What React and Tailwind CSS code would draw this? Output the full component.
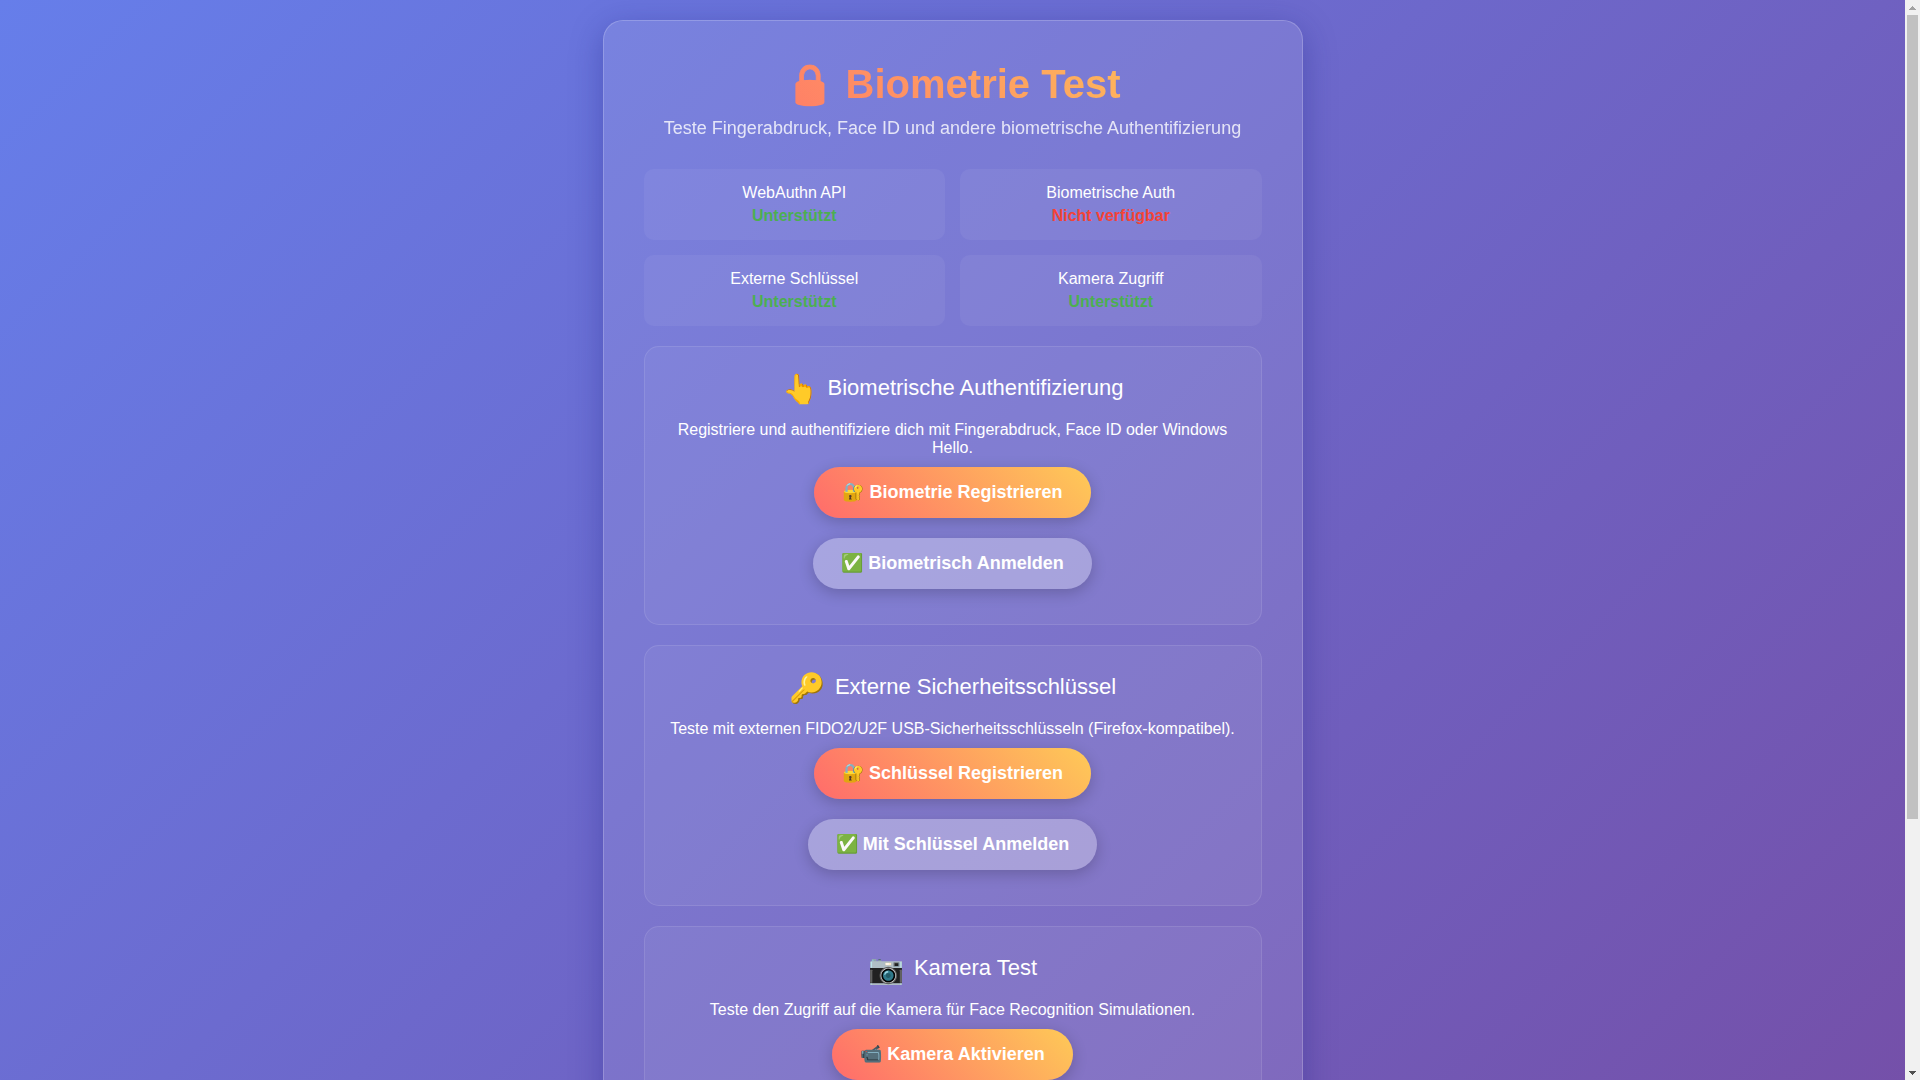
import React from 'react';

const checks = [
  { label: 'WebAuthn API', ok: true, status: 'Unterstützt' },
  { label: 'Biometrische Auth', ok: false, status: 'Nicht verfügbar' },
  { label: 'Externe Schlüssel', ok: true, status: 'Unterstützt' },
  { label: 'Kamera Zugriff', ok: true, status: 'Unterstützt' },
];

const sections = [
  {
    icon: '👆',
    title: 'Biometrische Authentifizierung',
    text: 'Registriere und authentifiziere dich mit Fingerabdruck, Face ID oder Windows Hello.',
    actions: [
      { label: '🔐 Biometrie Registrieren', primary: true },
      { label: '✅ Biometrisch Anmelden' },
    ],
  },
  {
    icon: '🔑',
    title: 'Externe Sicherheitsschlüssel',
    text: 'Teste mit externen FIDO2/U2F USB-Sicherheitsschlüsseln (Firefox-kompatibel).',
    actions: [
      { label: '🔐 Schlüssel Registrieren', primary: true },
      { label: '✅ Mit Schlüssel Anmelden' },
    ],
  },
  {
    icon: '📷',
    title: 'Kamera Test',
    text: 'Teste den Zugriff auf die Kamera für Face Recognition Simulationen.',
    actions: [{ label: '📹 Kamera Aktivieren', primary: true }],
  },
];

const StatusItem = ({ item }) => (
  <div className="rounded-[10px] bg-white/5 p-[15px] text-center leading-[18px]">
    <div className="mb-[5px]">{item.label}</div>
    <div className={`font-bold ${item.ok ? 'text-[#4caf50]' : 'text-[#f44336]'}`}>
      {item.status}
    </div>
  </div>
);

const TestSection = ({ section }) => (
  <section className="mb-5 rounded-[15px] border border-white/10 bg-white/5 p-[25px] text-center">
    <h2 className="mb-[17px] h-8 text-[22px] leading-8">
      <span className="mr-[10px] align-middle text-[29px]">{section.icon}</span>
      {section.title}
    </h2>
    <p className="leading-[18px]">{section.text}</p>
    <div className="flex flex-col items-center">
      {section.actions.map((action) => (
        <button
          key={action.label}
          type="button"
          className={`my-[10px] rounded-full px-7 py-[15px] text-[18px] leading-[21px] font-bold shadow-[0_4px_15px_rgba(0,0,0,0.2)] ${
            action.primary
              ? 'bg-[linear-gradient(45deg,#ff6b6b,#feca57)]'
              : 'bg-white/30'
          }`}
        >
          {action.label}
        </button>
      ))}
    </div>
  </section>
);

const Scrollbar = () => (
  <div className="flex w-[15px] shrink-0 flex-col bg-[#f1f1f1]" aria-hidden="true">
    <div className="flex h-[15px] items-center justify-center">
      <svg width="7" height="4" viewBox="0 0 7 4" fill="#a3a3a3" shapeRendering="crispEdges">
        <path d="M3 0h1v1h1v1h1v1h1v1H0V3h1V2h1V1h1z" />
      </svg>
    </div>
    <div className="flex-1 px-[2px]">
      <div className="h-[76.6%] bg-[#c1c1c1]" />
    </div>
    <div className="flex h-[15px] items-center justify-center">
      <svg width="7" height="4" viewBox="0 0 7 4" fill="#505050" shapeRendering="crispEdges">
        <path d="M0 0h7v1H6v1H5v1H4v1H3V3H2V2H1V1H0z" />
      </svg>
    </div>
  </div>
);

const App = () => {
  return (
    <div className="flex h-screen font-['Liberation_Sans',Arial,sans-serif] text-base text-white">
      <div className="flex-1 overflow-y-auto [scrollbar-width:none]">
        <div className="flex min-h-[1410px] justify-center bg-[linear-gradient(135deg,#667eea_0%,#764ba2_100%)] p-5">
          <main className="w-full max-w-[700px] rounded-[20px] border border-white/20 bg-white/10 p-10 shadow-[0_8px_32px_rgba(31,38,135,0.37)]">
            <header className="mb-[30px] text-center">
              <h1 className="mb-[10px] bg-[linear-gradient(45deg,#ff6b6b,#feca57)] bg-clip-text text-[40px] leading-[47px] font-bold text-transparent">
                🔒 Biometrie Test
              </h1>
              <p className="text-[18px] leading-[21px] opacity-80">
                Teste Fingerabdruck, Face ID und andere biometrische Authentifizierung
              </p>
            </header>

            <div className="mb-5 grid grid-cols-2 gap-[15px]">
              {checks.map((item) => (
                <StatusItem key={item.label} item={item} />
              ))}
            </div>

            {sections.map((section) => (
              <TestSection key={section.title} section={section} />
            ))}
          </main>
        </div>
      </div>
      <Scrollbar />
    </div>
  );
};

export default App;
